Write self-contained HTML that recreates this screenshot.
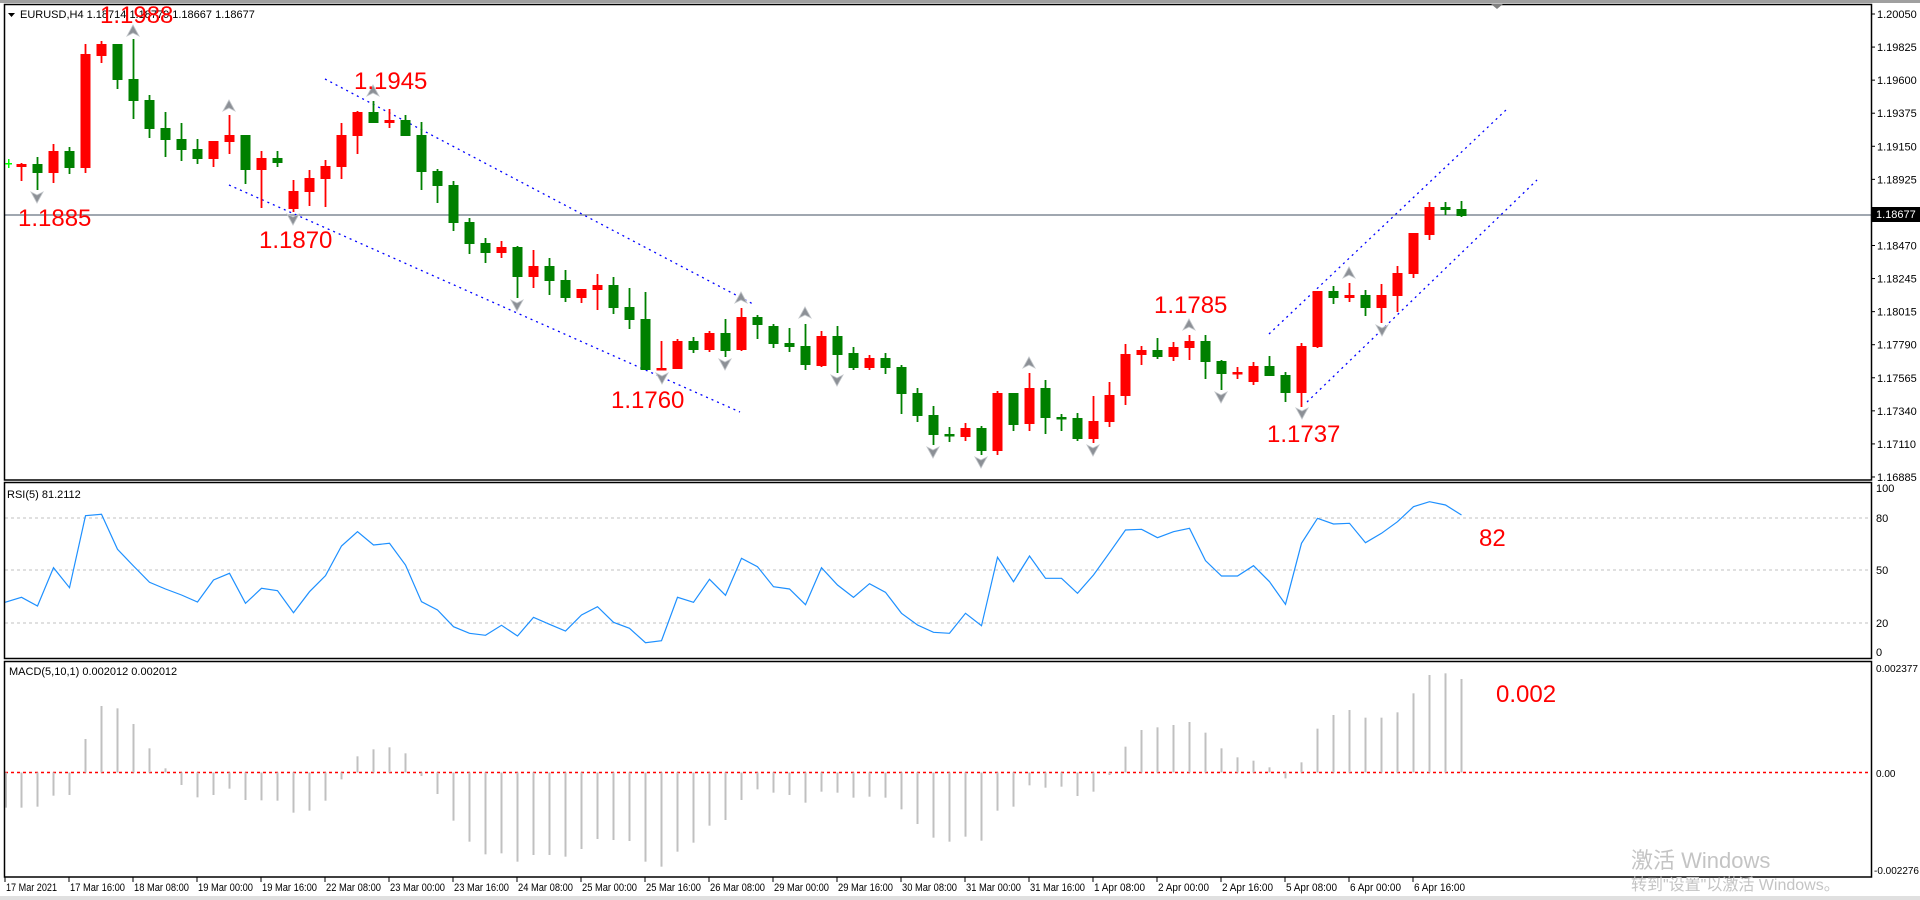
<!DOCTYPE html>
<html><head><meta charset="utf-8"><style>
html,body{margin:0;padding:0;background:#fff;width:1920px;height:900px;overflow:hidden}
svg{display:block}
text{font-family:"Liberation Sans","Noto Sans CJK SC",sans-serif}
.ax{font-size:11px;fill:#000}
.big{font-size:24px;fill:#ff0000}
</style></head><body>
<svg id="s" width="1920" height="900" viewBox="0 0 1920 900" xmlns="http://www.w3.org/2000/svg">
<rect x="0" y="0" width="1920" height="900" fill="#fff"/>
<rect x="0" y="0" width="1920" height="3" fill="#a0a0a0"/>
<rect x="0" y="896" width="1920" height="4" fill="#e0e0e0"/>
<g id="grid"></g>
<g id="bars"></g>
<line x1="5" y1="215" x2="1871" y2="215" stroke="#808a96" stroke-width="1.5"/>
<g stroke="#0000ff" stroke-width="1.3" stroke-dasharray="2,4" fill="none">
<line x1="325" y1="79" x2="753" y2="304"/>
<line x1="229" y1="185" x2="740" y2="412"/>
<line x1="1269" y1="334" x2="1506" y2="110"/>
<line x1="1307" y1="402" x2="1537" y2="180"/>
</g>
<g id="candles"></g>
<g id="fr"></g>
<polyline id="rsi" fill="none" stroke="#1e90ff" stroke-width="1.2"/>
<g fill="none" stroke="#000" stroke-width="1.5">
<rect x="4.5" y="4.5" width="1867" height="475.5"/>
<rect x="4.5" y="482.5" width="1867" height="176"/>
<rect x="4.5" y="661.5" width="1867" height="215.5"/>
</g>
<rect x="5" y="163" width="7" height="1.5" fill="#00ff00"/>
<rect x="8" y="159" width="1.5" height="9" fill="#00ff00"/>
<polygon points="1491,4 1503,4 1497,9" fill="#808080"/>
<polygon points="8,13 15,13 11.5,17" fill="#000"/>
<text x="20" y="18" class="ax">EURUSD,H4  1.18714 1.18779 1.18667 1.18677</text>
<text x="7" y="498" class="ax" font-size="10">RSI(5) 81.2112</text>
<text x="9" y="675" class="ax" font-size="10">MACD(5,10,1) 0.002012 0.002012</text>
<g id="plab"></g>
<rect x="1872" y="207" width="48" height="15" fill="#000"/>
<text x="1876" y="218" class="ax" fill="#fff" style="fill:#fff">1.18677</text>
<g class="ax" font-size="10.5">
<text x="1876" y="492">100</text><text x="1876" y="522">80</text><text x="1876" y="574">50</text>
<text x="1876" y="627">20</text><text x="1876" y="656">0</text>
<text x="1876" y="672" font-size="10" textLength="42" lengthAdjust="spacingAndGlyphs">0.002377</text><text x="1876" y="777" font-size="10">0.00</text><text x="1874" y="874" font-size="10" textLength="45" lengthAdjust="spacingAndGlyphs">-0.002276</text>
</g>
<g id="tl" class="ax" font-size="10.5"></g>
<g>
<text x="100" y="23" class="big">1.1988</text>
<text x="18" y="226" class="big">1.1885</text>
<text x="259" y="248" class="big">1.1870</text>
<text x="354" y="89" class="big">1.1945</text>
<text x="611" y="408" class="big">1.1760</text>
<text x="1154" y="313" class="big">1.1785</text>
<text x="1267" y="442" class="big">1.1737</text>
<text x="1479" y="546" class="big">82</text>
<text x="1496" y="702" class="big">0.002</text>
</g>
<text x="1631" y="868" font-size="22" fill="#c4c4c4">激活 Windows</text>
<text x="1631" y="890" font-size="16" fill="#c4c4c4">转到"设置"以激活 Windows。</text>
</svg>
<script>
var NS="http://www.w3.org/2000/svg";
function el(p,t,a){var e=document.createElementNS(NS,t);for(var k in a)e.setAttribute(k,a[k]);p.appendChild(e);return e;}
var C=[["r",164,167,163,181],["g",164,173,157,190],["r",151,173,144,183],["g",151,168,147,174],["r",54,168,44,173],["r",44,56,41,63],["g",44,80,44,89],["g",79,101,39,119],["g",100,129,95,138],["g",128,140,112,157],["g",139,150,123,161],["g",149,159,139,164],["r",141,159,141,167],["r",135,142,115,154],["g",135,170,135,184],["r",158,170,151,208],["g",158,163,151,167],["r",191,209,180,212],["r",178,192,170,206],["r",166,179,160,207],["r",135,167,123,179],["r",112,136,111,154],["g",112,123,101,123],["r",120,123,109,128],
["g",120,136,115,136],["g",135,172,122,190],["g",171,186,169,203],["g",185,223,181,231],["g",222,244,218,254],["g",243,253,238,263],["r",247,253,241,258],["g",247,277,246,298],["r",266,277,250,288],["g",266,281,258,295],["g",280,298,270,302],["r",289,298,289,303],["r",285,290,274,310],["g",285,308,277,314],["g",307,320,288,329],["g",319,370,292,370],["r",368,370,341,370],["r",341,369,339,369],["g",341,350,337,353],["r",333,350,331,352],["g",333,351,319,357],["r",317,350,308,351],["g",317,325,315,339],["g",326,344,324,348],["g",343,347,328,352],["g",346,365,324,370],["r",336,366,331,367],["g",336,355,326,373],["g",353,368,347,370],["r",358,368,355,370],["g",358,368,353,374],
["g",367,394,365,414],["g",393,416,388,422],["g",415,435,406,445],["g",434,436,427,442],["r",428,437,423,441],["g",428,451,426,455],["r",393,451,391,455],["g",393,425,393,431],["r",388,424,373,431],["g",388,418,380,434],["g",417,418,414,431],["g",418,439,413,441],["r",421,439,396,443],["r",395,422,382,427],["r",354,396,344,405],["r",350,355,346,365],["g",350,357,338,359],["r",347,357,342,361],["r",341,348,335,360],["g",341,362,335,379],["g",361,374,360,390],["r",372,374,367,379],["r",366,382,362,385],["g",366,376,356,376],["g",375,393,372,402],["r",346,393,343,407],["r",291,347,291,348],["g",291,298,286,304],["r",295,298,283,302],["g",295,308,290,316],["r",295,308,284,323],["r",273,296,266,312],["r",233,274,233,278],["r",207,235,202,240],["g",207,210,202,215],["g",209,216,201,217]];
var cg=document.getElementById("candles");
C.forEach(function(c,i){var x=21.5+16*i,col=c[0]=="r"?"#ff0000":"#008000";
el(cg,"rect",{x:x-0.9,y:c[3],width:1.8,height:c[4]-c[3],fill:col});
var h=Math.max(c[2]-c[1],2.5);el(cg,"rect",{x:x-5,y:c[1],width:10,height:h,fill:col});});
var F=[[133,31,1],[229,106,1],[373,91,1],[741,298,1],[805,313,1],[1029,363,1],[1189,325,1],[1349,273,1],
[37,197,0],[293,219,0],[517,305,0],[662,378,0],[725,364,0],[837,380,0],[933,452,0],[981,462,0],[1093,450,0],[1221,397,0],[1302,413,0],[1382,330,0]];
var fg=document.getElementById("fr");
F.forEach(function(f){var x=f[0],y=f[1];var p=f[2]?[x,y-6,x+6,y+5,x,y+2,x-6,y+5]:[x,y+6,x+6,y-5,x,y-2,x-6,y-5];
el(fg,"polygon",{points:p.join(","),fill:"#8c9096",stroke:"#c0c4c8","stroke-width":0.8});});
var R=[352,378,263,323,107,103,208,258,307,327,345,366,300,280,370,325,332,398,335,287,198,155,195,190,255,365,390,440,460,466,436,468,412,433,453,405,380,427,445,488,482,352,367,298,346,235,260,320,327,374,263,315,352,311,337,400,435,457,460,400,437,232,305,228,295,295,340,285,218,150,148,173,155,145,242,288,288,257,305,373,190,115,132,130,188,160,125,80,65,75,105];
var pts=["5,"+(480+367/3)];R.forEach(function(v,i){pts.push((21.5+16*i)+","+(480+v/3).toFixed(1));});
document.getElementById("rsi").setAttribute("points",pts.join(" "));
var g=document.getElementById("grid");
[518,570,623].forEach(function(y){el(g,"line",{x1:5,y1:y,x2:1871,y2:y,stroke:"#c0c0c0","stroke-dasharray":"3,3"});});
el(g,"line",{x1:5,y1:772.5,x2:1871,y2:772.5,stroke:"#ff0000","stroke-width":1.5,"stroke-dasharray":"3,3"});
var M=[443,440,407,405,237,138,145,192,265,325,375,412,405,386,420,421,422,458,452,422,358,289,268,262,280,348,402,482,545,583,580,605,585,585,590,567,537,540,543,605,620,575,548,497,480,420,388,398,405,428,395,398,413,410,413,448,492,533,545,530,542,452,440,376,383,380,408,395,345,260,210,202,195,186,218,265,292,302,322,355,307,206,165,150,173,173,157,100,45,40,57];
var bg=document.getElementById("bars");var z=772.5;
el(bg,"rect",{x:5,y:z,width:2,height:(660+443/3)-z,fill:"#c0c0c0"});
M.forEach(function(v,i){var y=660+v/3,x=21.5+16*i-1;el(bg,"rect",{x:x,y:Math.min(y,z),width:2,height:Math.max(Math.abs(y-z),1),fill:"#c0c0c0"});});
var pl=document.getElementById("plab");
["1.20050","1.19825","1.19600","1.19375","1.19150","1.18925",null,"1.18470","1.18245","1.18015","1.17790","1.17565","1.17340","1.17110","1.16885"].forEach(function(t,i){
var y=14+i*33.07;el(pl,"line",{x1:1871,y1:y,x2:1875,y2:y,stroke:"#000"});if(t){var e=el(pl,"text",{x:1877,y:y+4,"class":"ax","font-size":"10.5"});e.textContent=t;}});
var T=["17 Mar 2021","17 Mar 16:00","18 Mar 08:00","19 Mar 00:00","19 Mar 16:00","22 Mar 08:00","23 Mar 00:00","23 Mar 16:00","24 Mar 08:00","25 Mar 00:00","25 Mar 16:00","26 Mar 08:00","29 Mar 00:00","29 Mar 16:00","30 Mar 08:00","31 Mar 00:00","31 Mar 16:00","1 Apr 08:00","2 Apr 00:00","2 Apr 16:00","5 Apr 08:00","6 Apr 00:00","6 Apr 16:00"];
var tl=document.getElementById("tl");
T.forEach(function(t,i){var x=5+64*i;el(tl,"line",{x1:x,y1:877,x2:x,y2:882,stroke:"#000"});var e=el(tl,"text",{x:x+1,y:891,textLength:t.length>11?55:51,lengthAdjust:"spacingAndGlyphs"});e.textContent=t;});
</script>
</body></html>
